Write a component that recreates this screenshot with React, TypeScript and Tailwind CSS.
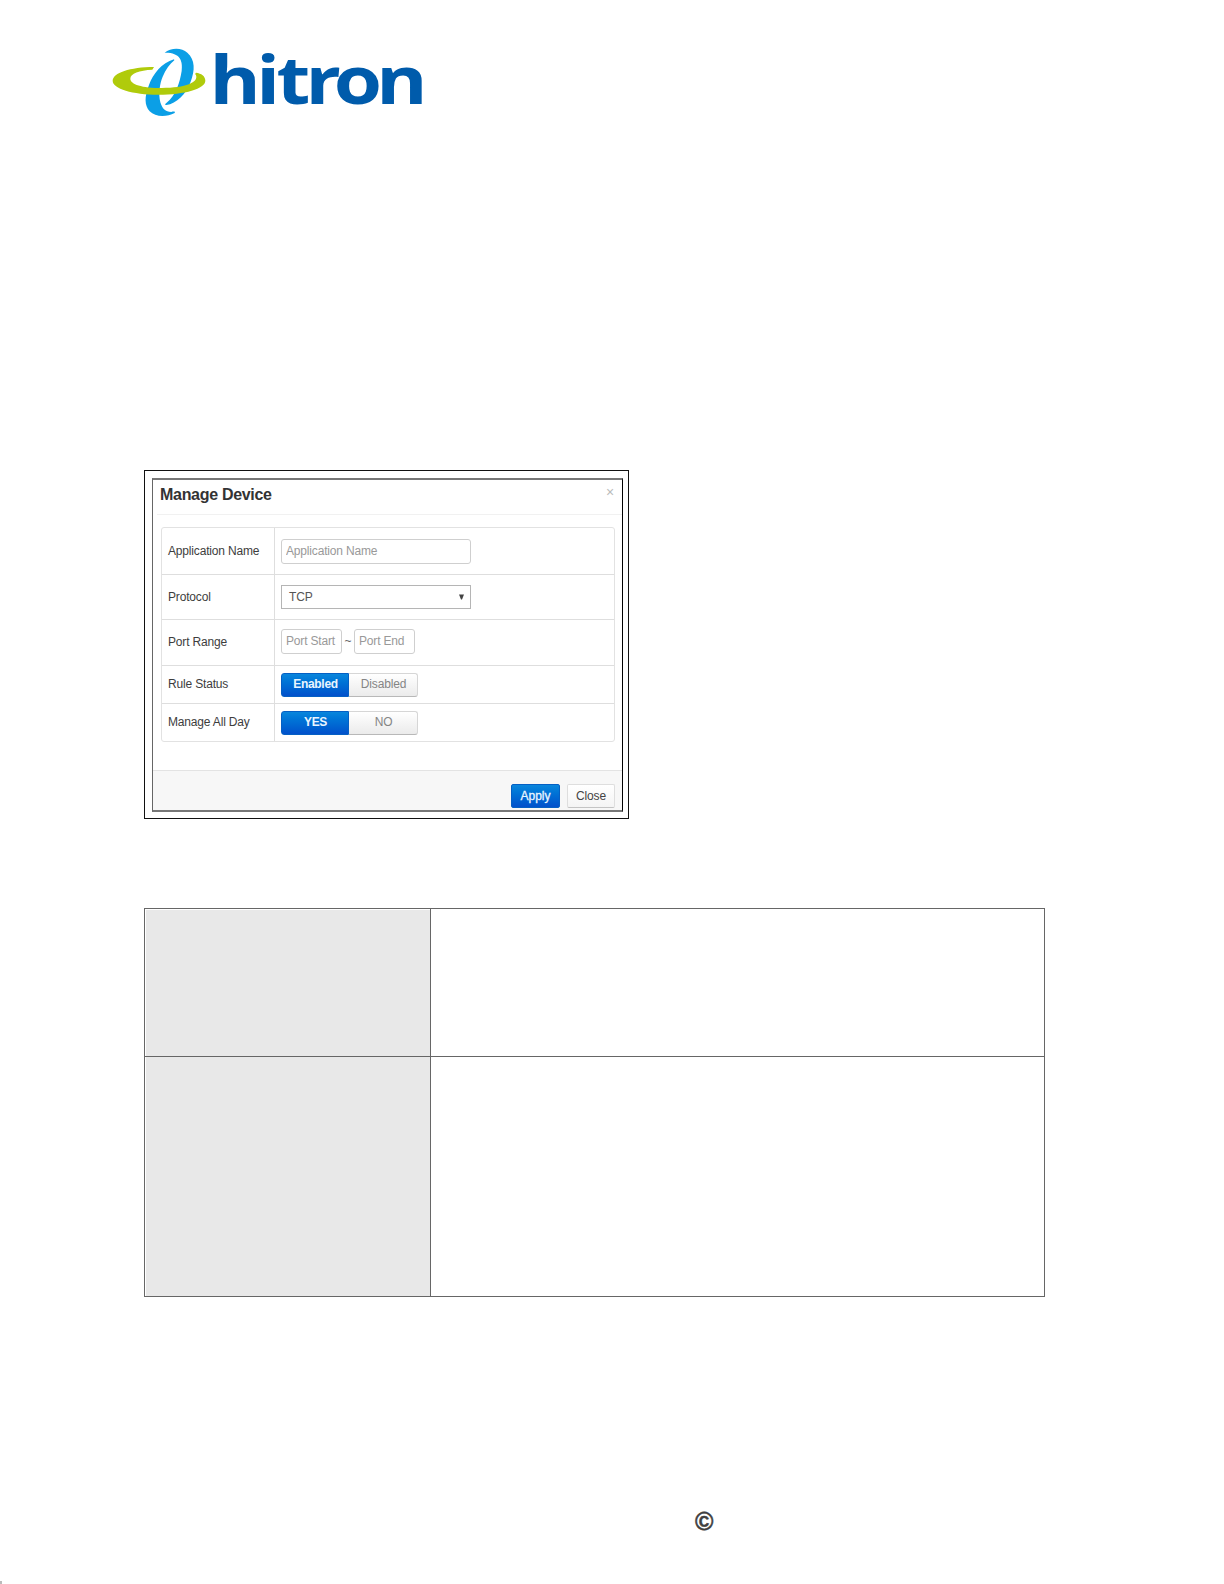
import type { ReactNode } from 'react';

const Logo = () => (
  <svg width="340" height="95" viewBox="0 0 1020 285" className="ml-[100px] block overflow-visible">
    <path d="M194 53C212 38 245 37 262 53C286 75 285 105 272 140C258 177 230 206 199 210C194 211 195 206 200 203C228 181 239 144 245 108C249 76 240 52 194 53Z" fill="#0b9fe6" />
    <path d="M222 73C185 84 159 117 147 150C133 185 133 211 149 229C166 247 200 247 224 234C227 229 220 229 214 231C196 231 187 222 181 202C175 175 179 147 188 125C197 103 210 87 223 76Z" fill="#0b9fe6" />
    <path d="M162 96C90 96 38 114 38 137C38 161 98 179 175 179C254 179 316 161 316 137C316 123 304 115 288 113C285 115 286 119 288 121C296 142 258 159 185 159C126 159 91 148 91 131C91 115 118 106 157 104Z" fill="#b0cb0b" />
    <text x="281 400.6 452.6 527 599.4 708.3" y="207" transform="scale(1.17 1)" fontFamily="'Open Sans', sans-serif" fontWeight="700" fontSize="200" fill="#005bab">hitron</text>
  </svg>
);

const Row = ({ label, height, children }: { label: string; height: string; children: ReactNode }) => (
  <div className={`flex border-b border-[#dedede] last:border-b-0 ${height}`}>
    <div className="flex w-[113px] shrink-0 items-center border-r border-[#dedede] pb-px pl-[6px] text-[#3d3d3d]">{label}</div>
    <div className="flex items-center pl-[6px]">{children}</div>
  </div>
);

const Toggle = ({ on, off }: { on: string; off: string }) => (
  <div className="flex h-[24px] w-[137px]">
    <button className="w-[68px] rounded-l-[3px] border border-[#0560c4] bg-gradient-to-b from-[#0a86dc] to-[#0350cb] pb-[2px] pl-px font-bold tracking-[-0.3px] text-[#eaf5ff]">{on}</button>
    <button className="w-[69px] rounded-r-[3px] border border-l-0 border-[#d6d6d6] border-b-[#b8b8b8] bg-gradient-to-b from-white to-[#ebebeb] pb-[2px] pl-px text-[#858585]">{off}</button>
  </div>
);

const inputClass = 'h-[25px] rounded-[3px] border border-[#cfcfcf] bg-white px-[4px] pb-px tracking-[-0.17px] placeholder:text-[#999] placeholder:opacity-100';

const ManageDevice = () => (
  <div className="ml-[144px] h-[349px] w-[485px] border border-[#111] bg-white p-[7px] font-['Liberation_Sans',sans-serif] text-[12px] leading-[14px] tracking-[-0.17px]">
    <div className="flex h-[334px] w-[471px] flex-col border-y-2 border-r border-l border-y-[#777] border-r-black border-l-[#666]">
      <div className="ml-[4px] flex h-[35px] shrink-0 justify-between border-b border-[#f1f1f1] pr-[8px] pl-[3px]">
        <h2 className="pt-[6px] text-[16px] leading-[18px] font-bold tracking-[-0.3px] text-[#333]">Manage Device</h2>
        <button className="h-[24px] text-[14px] text-[#bbb]">×</button>
      </div>
      <div className="mt-[12px] ml-[8px] h-[215px] w-[454px] shrink-0 rounded-[3px] border border-[#e2e2e2]">
        <Row label="Application Name" height="h-[47px]">
          <input className={`${inputClass} w-[190px]`} placeholder="Application Name" />
        </Row>
        <Row label="Protocol" height="h-[45px]">
          <div className="flex h-[24px] w-[190px] items-center justify-between border border-[#b5b5b5] pr-[5px] pb-px pl-[7px] text-[#555]">
            <span>TCP</span>
            <svg width="7" height="6" viewBox="0 0 7 6">
              <path d="M1 0.5H6L4 5.5H3Z" fill="#444" />
            </svg>
          </div>
        </Row>
        <Row label="Port Range" height="h-[46px]">
          <div className="flex items-center pb-[2px]">
            <input className={`${inputClass} w-[61px]`} placeholder="Port Start" />
            <span className="w-[12px] pb-px text-center text-[#666]">~</span>
            <input className={`${inputClass} w-[61px]`} placeholder="Port End" />
          </div>
        </Row>
        <Row label="Rule Status" height="h-[38px]">
          <Toggle on="Enabled" off="Disabled" />
        </Row>
        <Row label="Manage All Day" height="h-[37px]">
          <Toggle on="YES" off="NO" />
        </Row>
      </div>
      <div className="mt-auto flex h-[40px] shrink-0 justify-end gap-[7px] border-t border-[#e3e3e3] bg-[#f7f7f7] pt-[13px] pr-[7px]">
        <button className="h-[24px] w-[49px] rounded-[2px] border border-[#0560c4] bg-gradient-to-b from-[#0a86dc] to-[#0350cb] tracking-normal text-[#eaf5ff] [-webkit-text-stroke:0.3px]">Apply</button>
        <button className="h-[24px] w-[48px] rounded-[2px] border border-[#dedede] border-b-[#c4c4c4] bg-gradient-to-b from-white to-[#f4f4f4] text-[#444]">Close</button>
      </div>
    </div>
  </div>
);

// Empty description table: shaded label column, blank value column
const DescriptionTable = () => (
  <div className="ml-[144px] grid h-[389px] w-[901px] grid-cols-[286px_1fr] grid-rows-[148px_1fr] border border-[#666]">
    <div className="border-r border-b border-[#666] pt-px pl-px">
      <div className="h-full bg-[#e8e8e8]"></div>
    </div>
    <div className="border-b border-[#666]"></div>
    <div className="border-r border-[#666] pl-px">
      <div className="h-full bg-[#e8e8e8]"></div>
    </div>
    <div></div>
  </div>
);

const App = () => {
  return (
    <div className="flex h-[1584px] w-[1224px] flex-col overflow-hidden bg-white">
      <header className="h-[470px] shrink-0 pt-[35px]">
        <Logo />
      </header>
      <main className="flex flex-col gap-[89px]">
        <ManageDevice />
        <DescriptionTable />
      </main>
      <footer className="flex flex-1 flex-col justify-between">
        <div className="mt-[210px] ml-[695px] w-[18px] text-center font-['Liberation_Sans',sans-serif] text-[25px] leading-[28px] font-bold text-[#3f3f3f] [-webkit-text-stroke:0.5px]">©</div>
        <div className="h-[3px] w-[2px] bg-[#bbb]"></div>
      </footer>
    </div>
  );
};

export default App;
